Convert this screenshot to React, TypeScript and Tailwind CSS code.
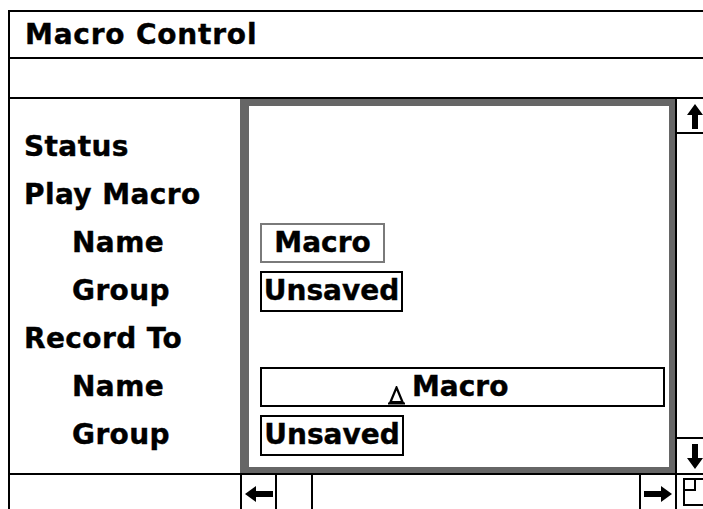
import React from "react";

const UpArrow = () => (
  <svg width="16" height="25" viewBox="0 0 16 25">
    <path d="M8 0 L16 11 L11 11 L11 25 L5 25 L5 11 L0 11 Z" fill="#000" />
  </svg>
);
const DownArrow = () => (
  <svg width="16" height="25" viewBox="0 0 16 25">
    <path d="M8 25 L16 14 L11 14 L11 0 L5 0 L5 14 L0 14 Z" fill="#000" />
  </svg>
);
const LeftArrow = () => (
  <svg width="28" height="16" viewBox="0 0 28 16">
    <path d="M0 8 L11 0 L11 5 L28 5 L28 11 L11 11 L11 16 Z" fill="#000" />
  </svg>
);
const RightArrow = () => (
  <svg width="28" height="16" viewBox="0 0 28 16">
    <path d="M28 8 L17 0 L17 5 L0 5 L0 11 L17 11 L17 16 Z" fill="#000" />
  </svg>
);
const GrowBox = () => (
  <svg width="30" height="30" viewBox="0 0 30 30">
    <rect x="1" y="1" width="26" height="26" fill="none" stroke="#000" strokeWidth="2" />
    <rect x="1" y="1" width="11" height="11" fill="none" stroke="#000" strokeWidth="2" />
  </svg>
);
const Caret = () => (
  <svg width="17" height="19" viewBox="0 0 17 19">
    <path d="M8.5 1.5 L14.5 16 L2.5 16 Z" fill="none" stroke="#000" strokeWidth="2.2" />
    <path d="M0 17.5 L17 17.5" stroke="#000" strokeWidth="2" />
  </svg>
);

const labels: { text: string; indent: boolean }[] = [
  { text: "Status", indent: false },
  { text: "Play Macro", indent: false },
  { text: "Name", indent: true },
  { text: "Group", indent: true },
  { text: "Record To", indent: false },
  { text: "Name", indent: true },
  { text: "Group", indent: true },
];

export default function App() {
  return (
    <div className="w-[703px] h-[509px] overflow-hidden bg-white text-black font-['DejaVu_Sans',sans-serif] font-bold [-webkit-text-stroke:0.4px_#000]">
      <div className="mt-[10px] ml-[8px] w-[740px] border-t-2 border-l-2 border-black flex flex-col">
        {/* title */}
        <div className="h-[47px] border-b-2 border-black pl-[15px] text-[28px] leading-[45px] tracking-[0.8px]">
          Macro Control
        </div>
        {/* blank row */}
        <div className="h-[40px] border-b-2 border-black" />
        {/* main */}
        <div className="h-[374px] flex">
          <div className="w-[230px] pt-[24px] flex flex-col">
            {labels.map((l, i) => (
              <div
                key={i}
                className={`h-[48px] text-[28px] leading-[48px] tracking-[0.4px] ${l.indent ? "pl-[62px]" : "pl-[14px]"}`}
              >
                {l.text}
              </div>
            ))}
          </div>
          <div className="w-[437px] h-full bg-[#666666] pl-[9px] pt-[7px] pr-[6px] pb-[6px] border-r-2 border-black">
            <div className="w-full h-full bg-white pt-[17px] pl-[11px] flex flex-col">
              <div className="h-[48px]" />
              <div className="h-[48px]" />
              <div className="h-[48px] flex items-center">
                <div className="w-[125px] h-[40px] border-2 border-[#7a7a7a] flex items-center justify-center text-[28px] leading-[36px]">
                  Macro
                </div>
              </div>
              <div className="h-[48px] flex items-center">
                <div className="w-[143px] h-[41px] border-2 border-black flex items-center justify-center text-[28px] leading-[36px]">
                  Unsaved
                </div>
              </div>
              <div className="h-[48px]" />
              <div className="h-[48px] flex items-center">
                <div className="w-[405px] h-[40px] border-2 border-black flex items-end pl-[126px]">
                  <div className="leading-none">
                    <Caret />
                  </div>
                  <div className="ml-[7px] self-center text-[28px] leading-[36px]">Macro</div>
                </div>
              </div>
              <div className="h-[48px] flex items-center">
                <div className="w-[144px] h-[41px] border-2 border-black flex items-center justify-center text-[28px] leading-[36px]">
                  Unsaved
                </div>
              </div>
            </div>
          </div>
          <div className="w-[36px] h-full flex flex-col">
            <div className="h-[35px] border-b-2 border-black flex items-center justify-center pt-[1px]">
              <UpArrow />
            </div>
            <div className="flex-1" />
            <div className="h-[36px] border-t-2 border-black flex items-center justify-center">
              <DownArrow />
            </div>
          </div>
        </div>
        {/* bottom row */}
        <div className="h-[42px] border-t-2 border-black flex">
          <div className="w-[232px] border-r-2 border-black" />
          <div className="w-[35px] border-r-2 border-black flex items-start justify-center pt-[11px]">
            <LeftArrow />
          </div>
          <div className="w-[36px] border-r-2 border-black" />
          <div className="w-[326px]" />
          <div className="w-[38px] border-l-2 border-r-2 border-black flex items-start justify-center pt-[11px]">
            <RightArrow />
          </div>
          <div className="w-[40px] pl-[6px] pt-[3px]">
            <GrowBox />
          </div>
        </div>
      </div>
    </div>
  );
}
